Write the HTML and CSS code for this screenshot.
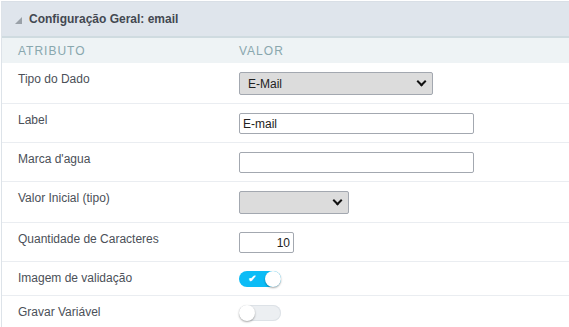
FILE: index.html
```html
<!DOCTYPE html>
<html lang="pt">
<head>
    <meta charset="UTF-8">
    <title>Configuração Geral</title>
    <link rel="stylesheet" href="styles.css">
</head>
<body>

    <!-- Painel de configuração -->
    <div class="panel">
        <div class="panel-title">
            <span class="caret"></span>
            Configuração Geral: email
        </div>
        <table class="props">
            <thead>
                <tr>
                    <th class="col-attr">Atributo</th>
                    <th>Valor</th>
                </tr>
            </thead>
            <tbody>
                <tr>
                    <td>Tipo do Dado</td>
                    <td>
                        <div class="select select-wide">E-Mail<span class="chev"></span></div>
                    </td>
                </tr>
                <tr>
                    <td>Label</td>
                    <td><input class="text" type="text" value="E-mail"></td>
                </tr>
                <tr>
                    <td>Marca d'agua</td>
                    <td><input class="text" type="text" value=""></td>
                </tr>
                <tr>
                    <td>Valor Inicial (tipo)</td>
                    <td>
                        <div class="select select-small"><span class="chev"></span></div>
                    </td>
                </tr>
                <tr>
                    <td>Quantidade de Caracteres</td>
                    <td><input class="text num" type="text" value="10"></td>
                </tr>
                <tr>
                    <td>Imagem de validação</td>
                    <td><span class="toggle on"><span class="check">&#10004;</span><span class="knob"></span></span></td>
                </tr>
                <tr>
                    <td>Gravar Variável</td>
                    <td><span class="toggle"><span class="knob"></span></span></td>
                </tr>
            </tbody>
        </table>
    </div>

</body>
</html>
```

FILE: styles.css
```css
/* Base */
body {
    margin: 0;
    padding: 0;
    background: #fff;
    font-family: "Liberation Sans", Arial, sans-serif;
    font-size: 12px;
    color: #4b5058;
    overflow: hidden;
}

/* Panel */
.panel {
    margin-top: 1px;
    margin-left: 1px;
    border-top: 1px solid #d9dfe6;
    border-left: 1px solid #dde3e9;
}

.panel-title {
    height: 34px;
    display: flex;
    align-items: center;
    padding-left: 13px;
    background: #dfe5ec;
    border-bottom: 2px solid #cfdbe0;
    font-weight: bold;
    font-size: 12px;
    color: #434851;
}

.caret {
    width: 0;
    height: 0;
    border-left: 7px solid transparent;
    border-bottom: 7px solid #9aa1a8;
    margin-right: 7px;
    margin-top: 2px;
}

/* Table */
.props {
    width: 100%;
    border-collapse: collapse;
}

.props th {
    height: 25px;
    padding: 0 0 0 16px;
    background: #eef3f5;
    text-align: left;
    font-weight: normal;
    font-size: 12px;
    letter-spacing: 1px;
    text-transform: uppercase;
    color: #89a7ae;
}

.props th.col-attr {
    width: 205px;
}

.props td {
    padding: 9px 0 8px 16px;
    vertical-align: top;
    border-bottom: 1px solid #eaedf1;
    line-height: 14px;
}

/* Selects */
.select {
    box-sizing: border-box;
    height: 23px;
    display: flex;
    align-items: center;
    padding-left: 8px;
    background: #dcdcdc;
    border: 1px solid #a3a8b0;
    border-radius: 2px;
    color: #222;
    position: relative;
}

.select-wide { width: 194px; }
.select-small { width: 110px; }

.chev {
    position: absolute;
    right: 7px;
    top: 5px;
    width: 5px;
    height: 5px;
    border-right: 2px solid #111;
    border-bottom: 2px solid #111;
    transform: rotate(45deg);
}

/* Inputs */
.text {
    box-sizing: border-box;
    display: block;
    width: 235px;
    height: 21px;
    margin: 0;
    padding: 0 3px;
    border: 1px solid #a3a8b0;
    border-radius: 2px;
    font-family: inherit;
    font-size: 12px;
    color: #222;
}

.text.num {
    width: 55px;
    text-align: right;
}

/* Toggles */
.toggle {
    display: block;
    position: relative;
    width: 42px;
    height: 16px;
    border-radius: 8px;
    background: #eceff2;
    box-shadow: inset 0 0 0 1px #dde2e7;
}

.toggle.on {
    background: #0cbcf6;
    box-shadow: none;
}

.toggle .knob {
    position: absolute;
    top: 0;
    left: 0;
    width: 16px;
    height: 16px;
    border-radius: 50%;
    background: #fff;
    box-shadow: 0 1px 2px rgba(0, 0, 0, 0.35);
}

.toggle.on .knob {
    left: 26px;
}

.check {
    position: absolute;
    left: 9px;
    top: 1px;
    font-size: 10px;
    font-weight: bold;
    color: #fff;
    line-height: 14px;
}
```
